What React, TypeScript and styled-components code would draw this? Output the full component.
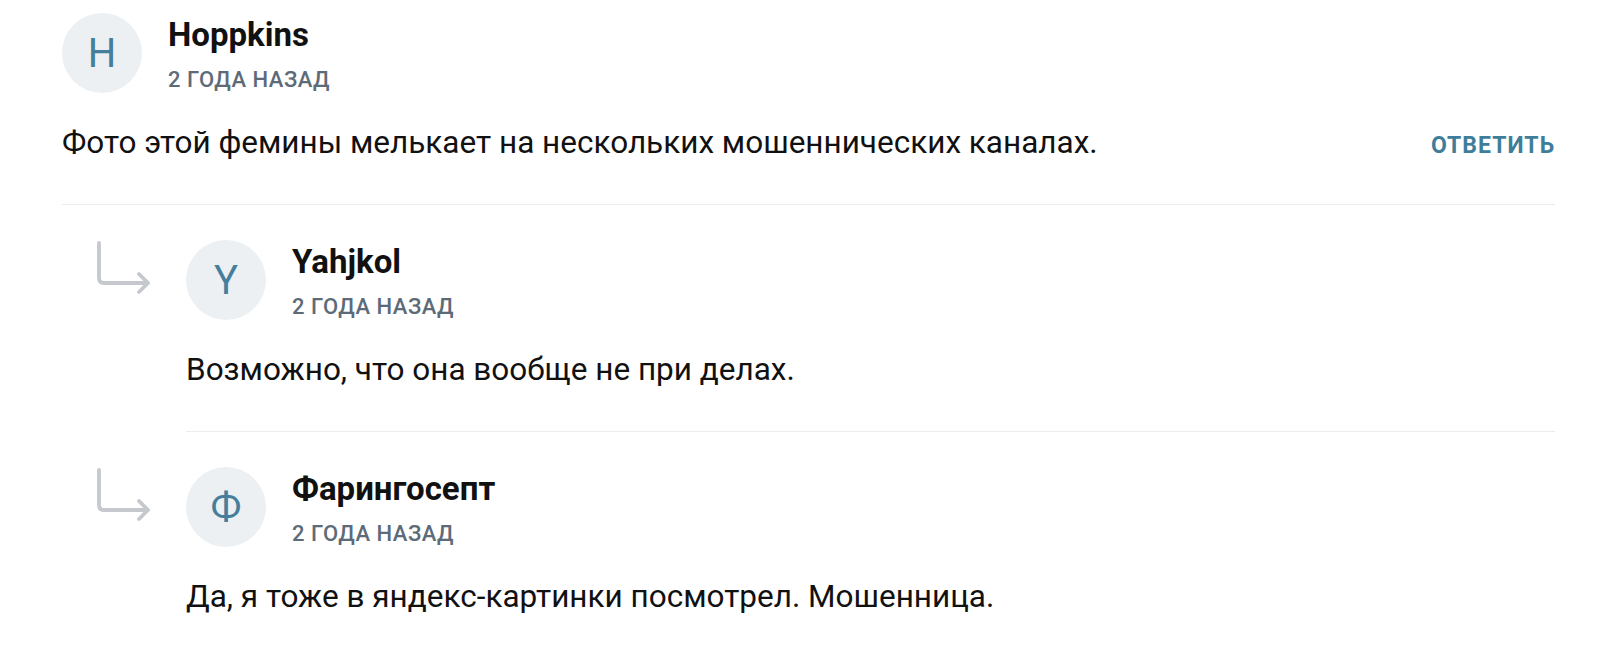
import styled, { createGlobalStyle } from "styled-components"

const GlobalStyle = createGlobalStyle`
  body {
    margin: 0;
    background: #ffffff;
    font-family: Roboto, "Noto Sans", "Liberation Sans", sans-serif;
    color: #111111;
  }
`

const Page = styled.div`
  padding: 13px 45px 0 62px;
`

const Comment = styled.div`
  display: flex;
  flex-direction: column;
`

const Header = styled.div`
  display: flex;
  align-items: flex-start;
  gap: 26px;
`

const Avatar = styled.div`
  width: 80px;
  height: 80px;
  flex-shrink: 0;
  border-radius: 50%;
  background: #edf0f3;
  color: #457f9c;
  font-size: 40px;
  font-weight: 400;
  display: flex;
  align-items: center;
  justify-content: center;
`

const Meta = styled.div`
  display: flex;
  flex-direction: column;
  padding-top: 3px;
`

const Name = styled.div`
  font-size: 33px;
  line-height: 38px;
  font-weight: 700;
  color: #111111;
`

const Time = styled.div`
  margin-top: 13px;
  font-size: 22px;
  line-height: 26px;
  font-weight: 500;
  letter-spacing: 0.5px;
  color: #5d6b79;
  text-transform: uppercase;
`

const BodyRow = styled.div`
  display: flex;
  align-items: baseline;
  justify-content: space-between;
  margin-top: 31px;
`

const Text = styled.div`
  font-size: 31.5px;
  line-height: 38px;
  color: #111111;
`

const ReplyButton = styled.button`
  border: none;
  background: none;
  padding: 0;
  font-family: inherit;
  font-size: 23px;
  font-weight: 700;
  letter-spacing: 1px;
  color: #3e7e9a;
  text-transform: uppercase;
  cursor: pointer;
`

const Divider = styled.div`
  height: 1px;
  background: #ececec;
  margin: 42px 0 35px;
`

const ReplyRow = styled.div`
  display: flex;
`

const ArrowCol = styled.div`
  width: 124px;
  flex-shrink: 0;
  padding-left: 33px;
  box-sizing: border-box;
`

const ReplyBody = styled.div`
  flex: 1;
  display: flex;
  flex-direction: column;
`

const ReplyArrow = () => (
  <svg width="60" height="56" viewBox="0 0 60 56" fill="none">
    <path
      d="M4 3 V38 Q4 43 9 43 H53 M44 34 L53 43 L44 52"
      stroke="#c5c9ce"
      strokeWidth="3.8"
      strokeLinecap="round"
      strokeLinejoin="round"
    />
  </svg>
)

interface CommentData {
  name: string
  time: string
  text: string
}

const replies: CommentData[] = [
  { name: "Yahjkol", time: "2 года назад", text: "Возможно, что она вообще не при делах." },
  {
    name: "Фарингосепт",
    time: "2 года назад",
    text: "Да, я тоже в яндекс-картинки посмотрел. Мошенница.",
  },
]

const CommentHeader = ({ name, time }: { name: string; time: string }) => (
  <Header>
    <Avatar>{name[0]}</Avatar>
    <Meta>
      <Name>{name}</Name>
      <Time>{time}</Time>
    </Meta>
  </Header>
)

const App = () => (
  <>
    <GlobalStyle />
    <Page>
      <Comment>
        <CommentHeader name="Hoppkins" time="2 года назад" />
        <BodyRow>
          <Text>Фото этой фемины мелькает на нескольких мошеннических каналах.</Text>
          <ReplyButton>Ответить</ReplyButton>
        </BodyRow>
        <Divider />
      </Comment>
      {replies.map((r, i) => (
        <ReplyRow key={r.name}>
          <ArrowCol>
            <ReplyArrow />
          </ArrowCol>
          <ReplyBody>
            <CommentHeader name={r.name} time={r.time} />
            <BodyRow>
              <Text>{r.text}</Text>
            </BodyRow>
            {i < replies.length - 1 && <Divider />}
          </ReplyBody>
        </ReplyRow>
      ))}
    </Page>
  </>
)

export default App
